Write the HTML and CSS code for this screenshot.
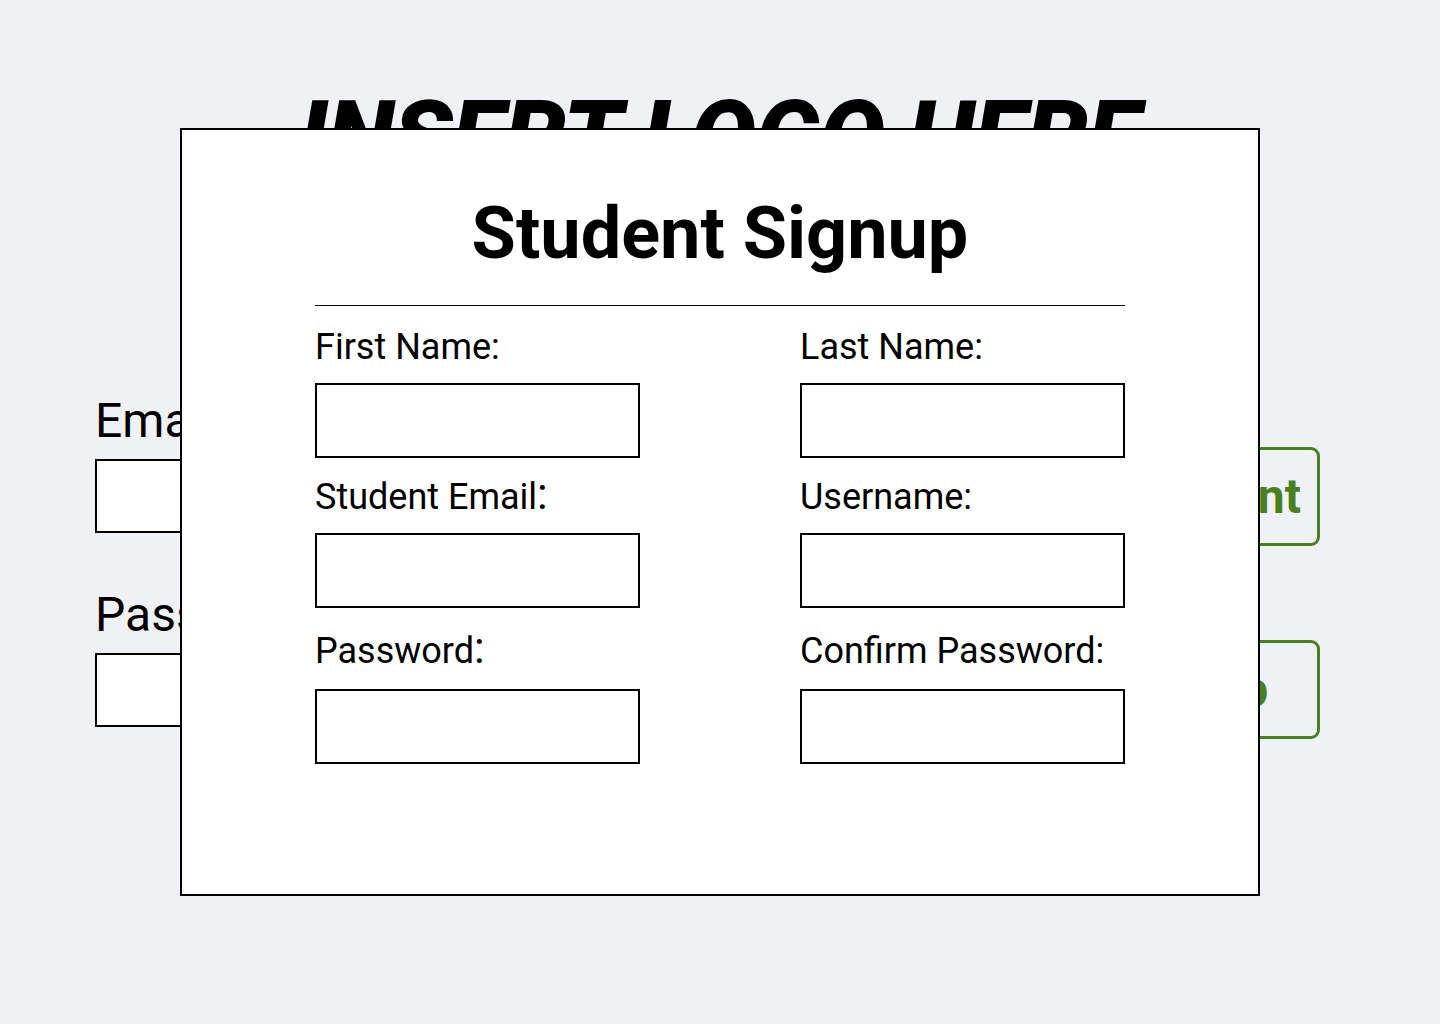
FILE: index.html
```html
<!DOCTYPE html>
<html lang="en">
<head>
<meta charset="utf-8">
<title>Student Signup</title>
<link rel="stylesheet" href="styles.css">
</head>
<body>
<div class="page">
  <header class="logo">INSERT LOGO HERE</header>
  <main class="login">
    <form class="login-form">
      <label class="login-label" for="email">Email</label>
      <input class="login-input" id="email" type="text">
      <label class="login-label" for="pass">Password</label>
      <input class="login-input" id="pass" type="password">
    </form>
    <div class="actions">
      <button class="action-btn" type="button">Create Account</button>
      <button class="action-btn" type="button">Staff Signup</button>
    </div>
  </main>
</div>

<div class="modal">
  <h1 class="modal-title">Student Signup</h1>
  <hr class="modal-rule">
  <form class="signup-grid">
    <div class="field">
      <label class="field-label">First Name:</label>
      <input class="field-input" type="text">
    </div>
    <div class="field">
      <label class="field-label">Last Name:</label>
      <input class="field-input" type="text">
    </div>
    <div class="field">
      <label class="field-label">Student Email<span class="tall-colon">:</span></label>
      <input class="field-input" type="text">
    </div>
    <div class="field">
      <label class="field-label">Username:</label>
      <input class="field-input" type="text">
    </div>
    <div class="field field-last">
      <label class="field-label">Password<span class="tall-colon">:</span></label>
      <input class="field-input" type="password">
    </div>
    <div class="field field-last">
      <label class="field-label">Confirm Password:</label>
      <input class="field-input" type="password">
    </div>
  </form>
</div>
</body>
</html>
```

FILE: styles.css
```css
* { box-sizing: border-box; }

html, body {
  margin: 0;
  padding: 0;
}

body {
  background: #f0f1f5;
  font-family: Roboto, "Liberation Sans", sans-serif;
  color: #000;
  width: 1440px;
  height: 1024px;
  overflow: hidden;
  position: relative;
}

.page {
  padding: 89px 120px 0 95px;
}

.logo {
  text-align: center;
  font-size: 98px;
  font-weight: 900;
  font-style: italic;
  line-height: 96px;
  letter-spacing: -0.75px;
  margin-left: 24px;
}

.login {
  display: flex;
  justify-content: space-between;
  align-items: flex-start;
  margin-top: 208px;
}

.login-form {
  display: flex;
  flex-direction: column;
  width: 420px;
}

.login-label {
  font-size: 48px;
  line-height: 56px;
  margin-bottom: 10px;
}

.login-input {
  width: 100%;
  height: 74px;
  border: 2px solid #000;
  background: #fff;
  margin-bottom: 54px;
}

.login-input:last-child {
  margin-bottom: 0;
}

.actions {
  display: flex;
  flex-direction: column;
  gap: 94px;
  margin-top: 54px;
}

.action-btn {
  height: 99px;
  padding: 0 16px;
  border: 3px solid #4a7f22;
  border-radius: 9px;
  background: transparent;
  color: #4a7f22;
  font-family: Roboto, "Liberation Sans", sans-serif;
  font-weight: 700;
  font-size: 48px;
  text-align: center;
}

.modal {
  position: absolute;
  left: 180px;
  top: 128px;
  width: 1080px;
  height: 768px;
  background: #fff;
  border: 2px solid #000;
  padding: 62px 133px 0;
}

.modal-title {
  margin: 0;
  text-align: center;
  font-size: 72px;
  font-weight: 700;
  line-height: 84px;
}

.modal-rule {
  margin: 29px 0 0;
  border: 0;
  border-top: 1px solid #000;
  height: 0;
}

.signup-grid {
  display: grid;
  grid-template-columns: 325px 325px;
  column-gap: 160px;
  row-gap: 18px;
  margin-top: 20px;
}

.field {
  display: flex;
  flex-direction: column;
}

.field-label {
  font-size: 36px;
  line-height: 42px;
  margin-bottom: 15px;
  white-space: nowrap;
}

.field-last {
  margin-top: 4px;
}

.field-last .field-label {
  margin-bottom: 17px;
}

.tall-colon {
  font-size: 44px;
  line-height: 0;
}

.field-input {
  width: 325px;
  height: 75px;
  border: 2px solid #000;
  background: #fff;
  margin: 0;
}
```
